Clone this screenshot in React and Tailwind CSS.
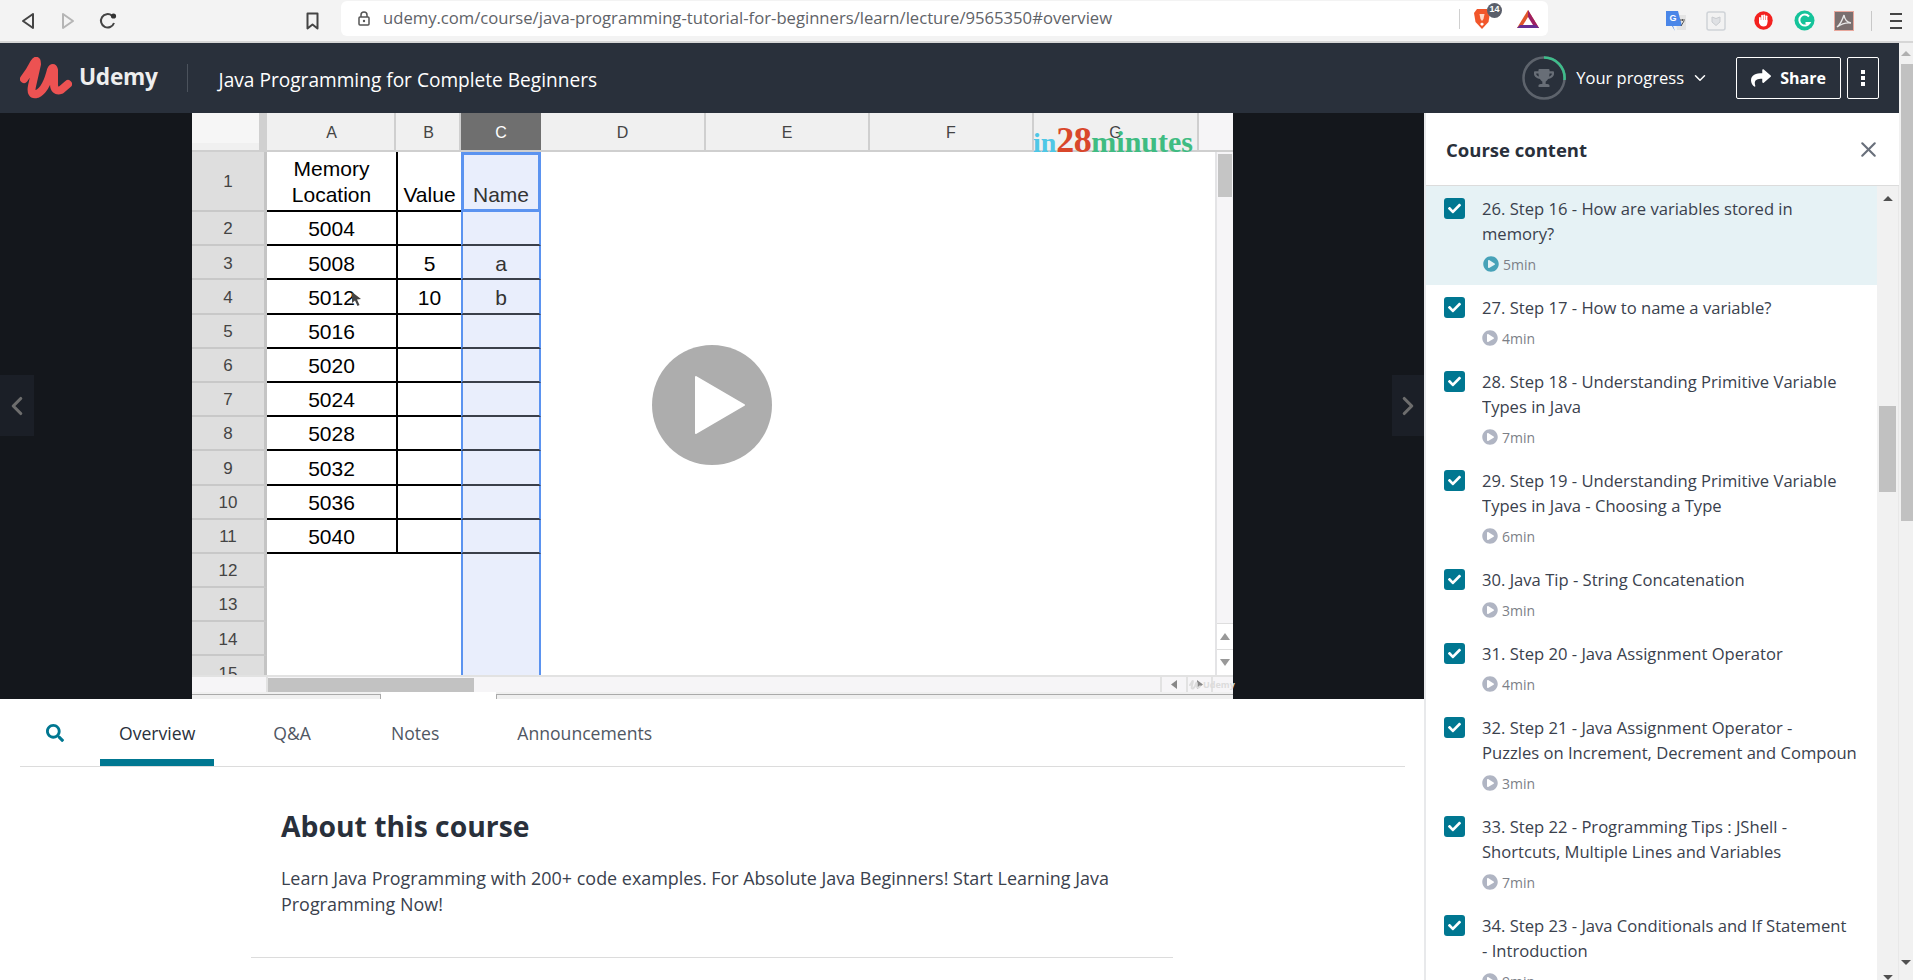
import React from "react";
import { FaTrophy, FaShare, FaCheck, FaSearch, FaPlayCircle } from "react-icons/fa";
import { ChevronDown, ChevronLeft, ChevronRight, X } from "lucide-react";

const lessons = [
  { lines: ["26. Step 16 - How are variables stored in", "memory?"], d: "5min", active: true },
  { lines: ["27. Step 17 - How to name a variable?"], d: "4min" },
  { lines: ["28. Step 18 - Understanding Primitive Variable", "Types in Java"], d: "7min" },
  { lines: ["29. Step 19 - Understanding Primitive Variable", "Types in Java - Choosing a Type"], d: "6min" },
  { lines: ["30. Java Tip - String Concatenation"], d: "3min" },
  { lines: ["31. Step 20 - Java Assignment Operator"], d: "4min" },
  { lines: ["32. Step 21 - Java Assignment Operator -", "Puzzles on Increment, Decrement and Compoun"], d: "3min" },
  { lines: ["33. Step 22 - Programming Tips : JShell -", "Shortcuts, Multiple Lines and Variables"], d: "7min" },
  { lines: ["34. Step 23 - Java Conditionals and If Statement", "- Introduction"], d: "9min" },
];

const sheetRows = [
  ["5004", "", ""], ["5008", "5", "a"], ["5012", "10", "b"], ["5016", "", ""], ["5020", "", ""],
  ["5024", "", ""], ["5028", "", ""], ["5032", "", ""], ["5036", "", ""], ["5040", "", ""],
];

function BrowserBar() {
  return (
    <div className="flex h-[43px] shrink-0 items-start border-b-2 border-[#d6d6d6] bg-[#f3f3f3]">
      <div className="flex h-[41px] w-[341px] shrink-0 items-center pl-[21px]">
        <svg width="14" height="18" viewBox="0 0 14 18" className="mr-[26px]"><path d="M12 2 L2 9 L12 16 Z" fill="none" stroke="#444" strokeWidth="2" strokeLinejoin="round" /></svg>
        <svg width="14" height="18" viewBox="0 0 14 18" className="mr-[24px]"><path d="M2 2 L12 9 L2 16 Z" fill="none" stroke="#b5b5b5" strokeWidth="2" strokeLinejoin="round" /></svg>
        <svg width="18" height="18" viewBox="0 0 18 18" className="mr-[189px]"><path d="M15 11 A6.7 6.7 0 1 1 13 3.7" fill="none" stroke="#444" strokeWidth="2" /><circle cx="14.5" cy="4" r="2.6" fill="#333" /></svg>
        <svg width="13" height="18" viewBox="0 0 13 18"><path d="M1.5 1.5 H11.5 V16.5 L6.5 12.5 L1.5 16.5 Z" fill="none" stroke="#444" strokeWidth="2" strokeLinejoin="round" /></svg>
      </div>
      <div className="mt-px flex h-[35px] w-[1207px] shrink-0 items-center rounded-[6px] bg-white pl-[17px]">
        <svg width="12" height="15" viewBox="0 0 12 15" className="mr-[13px]"><path d="M3 6 V4 A3 3 0 0 1 9 4 V6" fill="none" stroke="#555" strokeWidth="1.5" /><rect x="1" y="6" width="10" height="8" rx="1" fill="none" stroke="#555" strokeWidth="1.5" /><circle cx="6" cy="10" r="1.2" fill="#555" /></svg>
        <span className="w-[1076px] font-['Open_Sans',sans-serif] text-[16.65px] whitespace-nowrap text-[#5f6368]">udemy.com/course/java-programming-tutorial-for-beginners/learn/lecture/9565350#overview</span>
        <div className="h-[20px] w-px bg-[#d0d0d0]" />
        <div className="relative ml-[13px] h-[22px] w-[18px]">
          <svg width="18" height="22" viewBox="0 0 18 22"><path d="M4 1 H14 L17 5 L15.5 14 L9 21 L2.5 14 L1 5 Z" fill="#f1562b" /><path d="M6.5 6 H11.5 L10.5 11 L9 13 L7.5 11 Z" fill="#ffd9c9" /><path d="M7 16 L9 14.5 L11 16 L9 18 Z" fill="#fff" /></svg>
          <span className="absolute top-[-5px] left-[14px] flex h-[15px] w-[15px] items-center justify-center rounded-full bg-[#5a5f6b] font-['Liberation_Sans',sans-serif] text-[9px] font-bold text-white">14</span>
        </div>
        <svg width="24" height="20" viewBox="0 0 24 20" className="ml-[25px]"><path d="M12 1 L23 19 H1 Z" fill="#e0562b" /><path d="M12 1 L23 19 H16 L12 11 Z" fill="#9e1f63" /><path d="M1 19 H23 L20 16 H4 Z" fill="#662d91" /><path d="M12 8 L17 16 H7 Z" fill="#fff" /></svg>
      </div>
      <div className="flex h-[41px] flex-1 items-center pl-[118px]">
        <svg width="21" height="21" viewBox="0 0 21 21"><path d="M9 5 H20 V20 H11 Z" fill="#e4e4e4" /><path d="M0 1 H12 L16 16 H7 L9 21 L6 16 H0 Z" fill="#4a86e8" /><text x="3.5" y="11" fontSize="9" fontWeight="700" fill="#fff" fontFamily="Liberation Sans">G</text><path d="M14 10 H19 M16.5 9 V11 M15 16 L18 11" stroke="#555" fill="none" strokeWidth="1" /></svg>
        <svg width="20" height="20" viewBox="0 0 20 20" className="ml-[19px]"><rect x="1" y="1" width="18" height="18" rx="2" fill="#f2f2f2" stroke="#cfd3d8" strokeWidth="1.5" /><path d="M6 6 L10 7.5 L14 6 V11 L10 14.5 L6 11 Z" fill="#dfe1e4" stroke="#c9ccd0" /></svg>
        <svg width="19" height="19" viewBox="0 0 19 19" className="ml-[28px]"><circle cx="9.5" cy="9.5" r="9.2" fill="#f3211f" /><rect x="5" y="6" width="1.8" height="6" rx="0.9" fill="#fff" /><rect x="7.2" y="3.8" width="1.8" height="7" rx="0.9" fill="#fff" /><rect x="9.4" y="3.4" width="1.8" height="7" rx="0.9" fill="#fff" /><rect x="11.6" y="4.4" width="1.8" height="7" rx="0.9" fill="#fff" /><path d="M5 9 H13.4 V12 Q13 15.5 9.5 15.5 Q6.5 15.5 5 12 Z" fill="#fff" /></svg>
        <svg width="21" height="21" viewBox="0 0 21 21" className="ml-[21px]"><circle cx="10.5" cy="10.5" r="10" fill="#15c39a" /><path d="M15 6.5 A5.5 5.5 0 1 0 15.5 13 H11.5" fill="none" stroke="#fff" strokeWidth="2" /></svg>
        <svg width="20" height="20" viewBox="0 0 20 20" className="ml-[19px]"><rect x="0.5" y="0.5" width="19" height="19" fill="#7a6f6f" stroke="#e8a79c" /><path d="M3 16 Q7 13 10 4 Q11 11 17 12 Q10 11 3 16" fill="none" stroke="#e8e8e8" strokeWidth="1.4" /></svg>
        <div className="ml-[17px] h-[20px] w-px bg-[#c8c8c8]" />
        <div className="ml-[18px] flex w-[12px] flex-col gap-[5px]">
          <div className="h-[2px] bg-[#444]" /><div className="h-[2px] bg-[#444]" /><div className="h-[2px] bg-[#444]" />
        </div>
      </div>
    </div>
  );
}

function Logo() {
  return (
    <svg width="52" height="43" viewBox="0 0 52 43">
      <path d="M4 22 Q10 14 14 6 Q17 1 17 7 L12 29 Q10 39 17 37 Q26 33 31 13 Q33 9 34 13 L34 27 Q34 35 41 33 L48 27" fill="none" stroke="#ec5252" strokeWidth="8" strokeLinecap="round" strokeLinejoin="round" />
    </svg>
  );
}

function Header() {
  return (
    <header className="flex h-[70px] shrink-0 items-center bg-[#29303b] text-white">
      <div className="ml-[20px]"><Logo /></div>
      <span className="mb-[1px] ml-[7px] text-[22.7px] font-bold tracking-[-0.3px] text-[#eeeeee]">Udemy</span>
      <div className="ml-[29px] h-[28px] w-px bg-[#4b525c]" />
      <span className="ml-[31px] pt-[5px] text-[19.1px]">Java Programming for Complete Beginners</span>
      <div className="ml-auto flex items-center">
        <div className="relative flex h-[44px] w-[44px] items-center justify-center">
          <svg width="44" height="44" viewBox="0 0 44 44" className="absolute inset-0">
            <circle cx="22" cy="22" r="20.5" fill="none" stroke="#5d636c" strokeWidth="2.5" />
            <path d="M22 1.5 A20.5 20.5 0 0 1 42.5 24" fill="none" stroke="#3ebd8b" strokeWidth="2.5" />
          </svg>
          <FaTrophy size={20} color="#686e77" />
        </div>
        <span className="ml-[10px] pt-[1px] text-[16.5px]">Your progress</span>
        <ChevronDown size={18} strokeWidth={2} className="ml-[7px]" />
        <button className="ml-[27px] flex h-[42px] w-[105px] items-center justify-center gap-[9px] rounded-[2px] border border-white text-[16px] font-bold">
          <FaShare size={20} />Share
        </button>
        <button className="mr-[20px] ml-[6px] flex h-[42px] w-[32px] flex-col items-center justify-center gap-[2px] rounded-[2px] border border-white">
          <span className="h-[4px] w-[4px] bg-white" /><span className="h-[4px] w-[4px] bg-white" /><span className="h-[4px] w-[4px] bg-white" />
        </button>
      </div>
    </header>
  );
}

function ColHead({ w, label, dark }) {
  return (
    <div className={`flex h-full shrink-0 items-center justify-center border-r-2 pt-[2px] text-[16px] ${dark ? "border-[#6f6f6f] bg-[#6f6f6f] text-white" : "border-[#cfcfcf] bg-[#f0f0f0] text-[#444]"} ${w}`}>{label}</div>
  );
}

function RowHead({ n, h }) {
  return (
    <div className={`flex w-[75px] shrink-0 items-center justify-center border-r-[3px] border-b-2 border-r-[#c4c4c4] border-b-[#c8c8c8] bg-[#dedede] pt-[2px] text-[17px] text-[#444] ${h}`}>{n}</div>
  );
}

function Sheet() {
  return (
    <div className="flex h-full w-[1041px] shrink-0 flex-col bg-white font-['Liberation_Sans',sans-serif]">
      <div className="flex h-[39px] shrink-0 border-b-2 border-[#cfcfcf] bg-[#f0f0f0]">
        <div className="h-[30px] w-[67px] shrink-0 bg-[#f6f6f6]" />
        <div className="w-[8px] shrink-0 bg-[#d0d0d0]" />
        <ColHead w="w-[129px] pl-[2px]" label="A" />
        <ColHead w="w-[65px] pl-[2px]" label="B" />
        <ColHead w="w-[80px] pl-[2px]" label="C" dark />
        <ColHead w="w-[165px]" label="D" />
        <ColHead w="w-[164px]" label="E" />
        <ColHead w="w-[164px]" label="F" />
        <ColHead w="w-[165px]" label="G" />
        <div className="flex-1 bg-[#f6f5f7]" />
      </div>
      <div className="flex h-[523px] shrink-0 overflow-hidden">
        <div className="min-w-0 flex-1">
          <div className="flex h-[60px]">
            <RowHead n="1" h="h-[60px]" />
            <div className="flex w-[129px] shrink-0 items-center justify-center border-b-2 border-black pt-[2px] text-center text-[21px] leading-[26px] text-black">Memory<br />Location</div>
            <div className="flex w-[65px] shrink-0 items-end justify-center border-b-2 border-l-2 border-black pb-[2px] text-[21px] leading-[26px] text-black">Value</div>
            <div className="flex w-[80px] shrink-0 items-end justify-center border-[3px] border-[#5b93f0] bg-[#e9eefc] pb-[1px] text-[21px] leading-[26px] text-[#333]">Name</div>
          </div>
          {sheetRows.map((r, i) => (
            <div key={r[0]} className="flex h-[34.2px]">
              <RowHead n={i + 2} h="h-[34.2px]" />
              <div className="flex w-[129px] shrink-0 items-center justify-center border-b-2 border-black pt-[2px] text-[21px] text-black">{r[0]}</div>
              <div className="flex w-[65px] shrink-0 items-center justify-center border-b-2 border-l-2 border-black pt-[2px] text-[21px] text-black">{r[1]}</div>
              <div className="flex w-[80px] shrink-0 items-center justify-center border-x-2 border-b-2 border-x-[#5b93f0] border-b-[#3a3f4a] bg-[#e9eefc] pt-[2px] text-[21px] text-[#333]">{r[2]}</div>
            </div>
          ))}
          {[12, 13, 14, 15].map((n) => (
            <div key={n} className="flex h-[34.2px]">
              <RowHead n={n} h="h-[34.2px]" />
              <div className="w-[194px] shrink-0" />
              <div className="w-[80px] shrink-0 border-x-2 border-[#5b93f0] bg-[#e9eefc]" />
            </div>
          ))}
        </div>
        <div className="flex w-[18px] shrink-0 flex-col border-l-2 border-[#e4e4e6] bg-[#f6f5f7]">
          <div className="mx-auto mt-[2px] h-[43px] w-[14px] bg-[#c5c5c5]" />
          <div className="mt-auto flex h-[27px] items-center justify-center border-y border-[#dedede] bg-white">
            <svg width="10" height="7" viewBox="0 0 10 7"><path d="M5 0 L10 7 H0 Z" fill="#999" /></svg>
          </div>
          <div className="flex h-[25px] items-center justify-center bg-white">
            <svg width="10" height="7" viewBox="0 0 10 7"><path d="M5 7 L10 0 H0 Z" fill="#999" /></svg>
          </div>
        </div>
      </div>
      <div className="flex h-[17px] shrink-0 border-t-2 border-[#e2e2e2] bg-[#f6f5f7]">
        <div className="w-[76px] shrink-0 border-r-2 border-[#e2e2e2]" />
        <div className="mt-px h-[14px] w-[206px] shrink-0 bg-[#c2c2c2]" />
        <div className="w-[688px] shrink-0 border-r-2 border-[#e2e2e2]" />
        <div className="flex w-[26px] shrink-0 items-center justify-center border-r-2 border-[#e2e2e2]">
          <svg width="6" height="9" viewBox="0 0 6 9"><path d="M0 4.5 L6 0 V9 Z" fill="#888" /></svg>
        </div>
        <div className="flex w-[25px] shrink-0 items-center justify-center border-r-2 border-[#e2e2e2]">
          <svg width="6" height="9" viewBox="0 0 6 9"><path d="M6 4.5 L0 0 V9 Z" fill="#888" /></svg>
        </div>
      </div>
      <div className="flex flex-1 bg-[#f0f0f0]">
        <div className="mt-[2px] w-[189px] shrink-0 border-t border-r border-[#aaa]" />
        <div className="w-[115px] shrink-0 bg-white" />
        <div className="mt-[2px] flex-1 border-t border-l border-[#aaa]" />
      </div>
    </div>
  );
}

function Video() {
  return (
    <div className="relative flex h-[586px] shrink-0 overflow-hidden bg-[#14171c] pl-[192px]">
      <Sheet />
      <div className="absolute top-[9px] left-[1033px] flex items-baseline font-['Liberation_Serif',serif] leading-none font-bold whitespace-nowrap">
        <span className="text-[28px] text-[#4ec7e6]">in</span>
        <span className="text-[36px] tracking-[-0.5px] text-[#d9472b]">28</span>
        <span className="text-[30px] text-[#3fbc82]">minutes</span>
      </div>
      <svg width="12" height="16" viewBox="0 0 12 16" className="absolute top-[178px] left-[351px]"><path d="M1 1 L1 12 L4 9.5 L6.5 15 L8.5 14 L6 8.5 L10 8 Z" fill="#444" /></svg>
      <div className="absolute top-[565px] left-[1189px] flex items-center gap-[2px] text-[#dcdcdc]">
        <svg width="12" height="12" viewBox="0 0 52 43"><path d="M4 22 Q10 14 14 6 Q17 1 17 7 L12 29 Q10 39 17 37 Q26 33 31 13 Q33 9 34 13 L34 27 Q34 35 41 33 L48 27" fill="none" stroke="#dcdcdc" strokeWidth="8" strokeLinecap="round" /></svg>
        <span className="text-[9px] font-bold">Udemy</span>
      </div>
      <div className="absolute top-[232px] left-[652px] h-[120px] w-[120px] rounded-full bg-[#adadad]">
        <svg width="120" height="120" viewBox="0 0 120 120"><path d="M44 32 L92 60 L44 88 Z" fill="#fff" stroke="#fff" strokeWidth="2" strokeLinejoin="round" /></svg>
      </div>
      <div className="absolute top-[262px] left-0 flex h-[61px] w-[34px] items-center justify-center bg-[#1b1f27]"><ChevronLeft size={30} color="#6d6d6d" strokeWidth={2.5} /></div>
      <div className="absolute top-[262px] right-0 flex h-[61px] w-[32px] items-center justify-center bg-[#1b1f27]"><ChevronRight size={30} color="#6d6d6d" strokeWidth={2.5} /></div>
    </div>
  );
}

function Tabs() {
  return (
    <div className="ml-[20px] flex h-[68px] w-[1385px] shrink-0 items-stretch border-b border-[#dcdcdc] text-[17.6px] text-[#505763]">
      <div className="flex w-[80px] shrink-0 items-center pl-[26px]"><FaSearch size={18} color="#007791" /></div>
      <div className="flex items-center border-b-[7px] border-[#007791] px-[19px] pt-[8px] text-[#29303b]">Overview</div>
      <div className="ml-[40px] flex items-center px-[19px] pt-[1px]">Q&amp;A</div>
      <div className="ml-[42px] flex items-center px-[19px] pt-[1px]">Notes</div>
      <div className="ml-[40px] flex items-center px-[19px] pt-[1px]">Announcements</div>
    </div>
  );
}

function About() {
  return (
    <div className="ml-[251px] w-[922px] border-b border-[#dcdcdc] px-[30px] pt-[37px] pb-[40px]">
      <h2 className="text-[28.3px] leading-[44px] font-bold text-[#29303b]">About this course</h2>
      <p className="mt-[17px] w-[860px] text-[17.93px] leading-[26px] text-[#3a414d]">Learn Java Programming with 200+ code examples. For Absolute Java Beginners! Start Learning Java Programming Now!</p>
    </div>
  );
}

function Lesson({ item }) {
  return (
    <div className={`flex pt-[10px] pb-[11px] ${item.active ? "bg-[#e6f2f5]" : "bg-white"}`}>
      <div className="mt-[2px] ml-[18px] flex h-[21px] w-[21px] shrink-0 items-center justify-center rounded-[3px] bg-[#007791]"><FaCheck size={13} color="#fff" /></div>
      <div className="ml-[17px] min-w-0 flex-1 overflow-hidden">
        {item.lines.map((l) => (
          <div key={l} className="text-[16.6px] leading-[25px] whitespace-nowrap text-[#3a414d]">{l}</div>
        ))}
        <div className="mt-[8px] flex h-[20px] items-center gap-[4px] text-[14px] text-[#7c8087]">
          <FaPlayCircle size={16} color={item.active ? "#47a2b8" : "#b0b5c3"} className={item.active ? "ml-[1px]" : ""} />
          {item.d}
        </div>
      </div>
    </div>
  );
}

function Sidebar() {
  return (
    <aside className="flex w-[475px] shrink-0 flex-col border-l-2 border-[#e8e9eb] bg-white">
      <div className="flex h-[73px] shrink-0 items-center justify-between border-b border-[#dcdcdc] pr-[18px] pl-[20px]">
        <span className="pt-[1px] text-[18.5px] font-bold text-[#29303b]">Course content</span>
        <X size={25} color="#686f7a" strokeWidth={2} />
      </div>
      <div className="flex min-h-0 flex-1">
        <div className="w-[451px] shrink-0 overflow-hidden">
          {lessons.map((l) => <Lesson key={l.lines[0]} item={l} />)}
        </div>
        <div className="flex w-[22px] shrink-0 flex-col items-center border-r border-[#e8e8e8] bg-[#f1f1f1] pt-[10px]">
          <svg width="10" height="5" viewBox="0 0 10 5"><path d="M5 0 L10 5 H0 Z" fill="#505050" /></svg>
          <div className="mt-[205px] h-[88px] w-[17px] bg-[#c1c1c1]" />
          <svg width="10" height="5" viewBox="0 0 10 5" className="mt-[483px]"><path d="M5 5 L10 0 H0 Z" fill="#505050" /></svg>
        </div>
      </div>
    </aside>
  );
}

function PageScrollbar() {
  return (
    <div className="flex w-[14px] shrink-0 flex-col items-end bg-[#f1f1f1] pt-[8px]">
      <svg width="10" height="5" viewBox="0 0 10 5" className="mr-[2px]"><path d="M5 0 L10 5 H0 Z" fill="#b0b0b0" /></svg>
      <div className="mt-[8px] h-[457px] w-[12px] bg-[#c1c1c1]" />
      <svg width="10" height="5" viewBox="0 0 10 5" className="mt-[439px] mr-[2px]"><path d="M5 5 L10 0 H0 Z" fill="#505050" /></svg>
    </div>
  );
}

export default function App() {
  return (
    <div className="flex h-[980px] w-[1913px] flex-col overflow-hidden bg-white font-['Open_Sans',sans-serif]">
      <BrowserBar />
      <div className="flex min-h-0 flex-1">
        <div className="flex w-[1899px] shrink-0 flex-col">
          <Header />
          <div className="flex min-h-0 flex-1">
            <main className="w-[1424px] shrink-0">
              <Video />
              <Tabs />
              <About />
            </main>
            <Sidebar />
          </div>
        </div>
        <PageScrollbar />
      </div>
    </div>
  );
}
